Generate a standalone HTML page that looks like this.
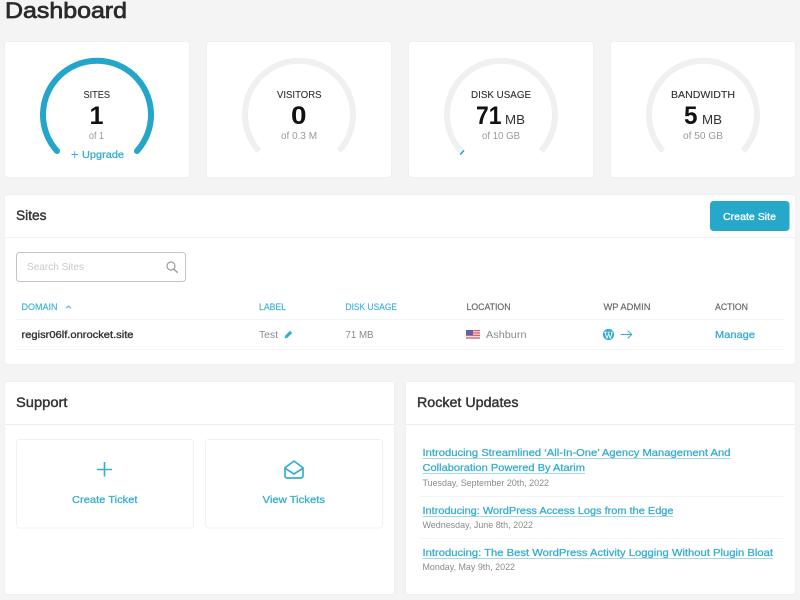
<!DOCTYPE html>
<html lang="en">
<head>
<meta charset="utf-8">
<title>Dashboard</title>
<style>
html,body{margin:0;padding:0;width:800px;height:600px;overflow:hidden;background:#f5f4f5}
svg{display:block;position:absolute;left:0;top:0;filter:blur(.3px)}
text{font-family:"Liberation Sans",sans-serif;font-size:10px}
.card{fill:#fff;stroke:#f1f0f1;stroke-width:1}
.h{fill:#333;font-size:13.5px;stroke:#333;stroke-width:.4}
.lbl{fill:#2c2c2c;font-size:10.5px;stroke:#2c2c2c;stroke-width:.1}
.num{font-weight:700;fill:#111;font-size:25px}
.mb{fill:#333;font-size:12.5px}
.of{fill:#9a9a9a;font-size:10.5px}
.th{font-size:9px;fill:#666;stroke:#666;stroke-width:.15}
.tb{font-size:9px;fill:#3fb1d1;stroke:#3fb1d1;stroke-width:.15}
.lnk{font-size:10.5px;fill:#38aecf;stroke:#38aecf;stroke-width:.3}
.dt{font-size:9.5px;fill:#8a8a8a}
.td{font-size:10.5px;fill:#8a8a8a}
.tr{fill:none;stroke:#f0f0f0;stroke-width:6}
.bl{fill:none;stroke:#23a6ca;stroke-width:6;stroke-linecap:round}
.ic{fill:none;stroke:#38aecf;stroke-linecap:round;stroke-linejoin:round}
.u{stroke:#a5dbe9;stroke-width:1}
.dv{stroke:#f3f3f3;stroke-width:1}
</style>
</head>
<body>
<svg width="800" height="600" viewBox="0 0 800 600" xmlns="http://www.w3.org/2000/svg">
<rect width="800" height="600" fill="#f5f4f5"/>
<text x="5" y="18" textLength="122" lengthAdjust="spacingAndGlyphs" style="font-size:22px;fill:#2a2a2a;stroke:#2a2a2a;stroke-width:.7">Dashboard</text>

<rect class="card" x="4.5" y="41.5" width="185" height="136" rx="3"/>
<rect class="card" x="206.5" y="41.5" width="185" height="136" rx="3"/>
<rect class="card" x="408.5" y="41.5" width="185" height="136" rx="3"/>
<rect class="card" x="610.5" y="41.5" width="185" height="136" rx="3"/>

<path class="bl" d="M57 151A54 54 0 1 1 137 151"/>
<text class="lbl" x="83.5" y="98" textLength="26.5" lengthAdjust="spacingAndGlyphs">SITES</text>
<text class="num" x="89.5" y="124" textLength="14" lengthAdjust="spacingAndGlyphs">1</text>
<text class="of" x="89" y="139" textLength="15" lengthAdjust="spacingAndGlyphs">of 1</text>
<path d="M71.5 154.5H78M74.7 151.3V157.7" fill="none" stroke="#38aecf" stroke-width=".9"/>
<text class="lnk" x="82" y="158" textLength="42" lengthAdjust="spacingAndGlyphs">Upgrade</text>

<path class="tr" d="M259 151A54 54 0 1 1 339 151"/>
<text class="lbl" x="277" y="98" textLength="44.5" lengthAdjust="spacingAndGlyphs">VISITORS</text>
<text class="num" x="291" y="124" textLength="15.5" lengthAdjust="spacingAndGlyphs">0</text>
<text class="of" x="281" y="139" textLength="36" lengthAdjust="spacingAndGlyphs">of 0.3 M</text>

<path class="tr" d="M461 151A54 54 0 1 1 541 151"/>
<path d="M460.2 154.5L464 150.3" stroke="#23a6ca" stroke-width="1.6" fill="none"/>
<text class="lbl" x="471" y="98" textLength="60" lengthAdjust="spacingAndGlyphs">DISK USAGE</text>
<text class="num" x="476" y="124" textLength="25.5" lengthAdjust="spacingAndGlyphs">71</text>
<text class="mb" x="505" y="124" textLength="20" lengthAdjust="spacingAndGlyphs">MB</text>
<text class="of" x="482" y="139" textLength="38" lengthAdjust="spacingAndGlyphs">of 10 GB</text>

<path class="tr" d="M663 151A54 54 0 1 1 743 151"/>
<text class="lbl" x="671" y="98" textLength="64" lengthAdjust="spacingAndGlyphs">BANDWIDTH</text>
<text class="num" x="684" y="124" textLength="13.5" lengthAdjust="spacingAndGlyphs">5</text>
<text class="mb" x="702" y="124" textLength="20" lengthAdjust="spacingAndGlyphs">MB</text>
<text class="of" x="683" y="139" textLength="40" lengthAdjust="spacingAndGlyphs">of 50 GB</text>

<rect class="card" x="4.5" y="194.5" width="791" height="170" rx="3"/>
<path d="M5 237.5H795" stroke="#f2f2f2"/>
<text class="h" x="16" y="220" textLength="30.5" lengthAdjust="spacingAndGlyphs">Sites</text>
<rect x="710" y="201" width="79.5" height="30" rx="3.5" fill="#26a8cb"/>
<text x="723" y="220" textLength="53" lengthAdjust="spacingAndGlyphs" style="fill:#fff;stroke:#fff;stroke-width:.3;font-size:10.5px">Create Site</text>

<rect x="16.5" y="252.5" width="169" height="29" rx="3" fill="#fff" stroke="#c4c4c4"/>
<text x="27" y="270" textLength="57" lengthAdjust="spacingAndGlyphs" style="fill:#c8c8c8;font-size:10.5px">Search Sites</text>
<circle cx="171" cy="266" r="4" fill="none" stroke="#9c9c9c" stroke-width="1.2"/>
<path d="M174 269.2L177.3 272.4" stroke="#9c9c9c" stroke-width="1.4" stroke-linecap="round"/>

<text class="tb" x="21.5" y="310" textLength="36" lengthAdjust="spacingAndGlyphs">DOMAIN</text>
<path d="M66 308.3L68.5 306L71 308.3" fill="none" stroke="#3fb1d1" stroke-width="1"/>
<text class="tb" x="259" y="310" textLength="27" lengthAdjust="spacingAndGlyphs">LABEL</text>
<text class="tb" x="345.5" y="310" textLength="51.5" lengthAdjust="spacingAndGlyphs">DISK USAGE</text>
<text class="th" x="466.5" y="310" textLength="44" lengthAdjust="spacingAndGlyphs">LOCATION</text>
<text class="th" x="603.5" y="310" textLength="47" lengthAdjust="spacingAndGlyphs">WP ADMIN</text>
<text class="th" x="715" y="310" textLength="33" lengthAdjust="spacingAndGlyphs">ACTION</text>
<path class="dv" d="M16 319.5H784M16 349.5H784"/>

<text x="21.5" y="338" textLength="112" lengthAdjust="spacingAndGlyphs" style="fill:#333;stroke:#333;stroke-width:.35;font-size:10.5px">regisr06lf.onrocket.site</text>
<text class="td" x="259" y="338" textLength="19" lengthAdjust="spacingAndGlyphs">Test</text>
<path d="M284.5 338.5L285.2 335.6L290 330.8L292.2 333L287.4 337.8Z" fill="#38aecf"/>
<text class="td" x="345.5" y="338" textLength="28" lengthAdjust="spacingAndGlyphs">71 MB</text>

<rect x="466" y="330" width="14" height="9" fill="#f3dfe2"/>
<path d="M466 330.6H480M466 333H480M466 335.4H480M466 338H480" stroke="#d9626d" stroke-width="1.2"/>
<rect x="466" y="330" width="7" height="5" fill="#5566b0"/>
<text class="td" x="486" y="338" textLength="40.5" lengthAdjust="spacingAndGlyphs">Ashburn</text>

<circle cx="608.5" cy="334.5" r="5.6" fill="#38aecf"/>
<path d="M604.8 332.2L607 338.3L608.6 333.8L610.2 338.3L612.3 332.2M604.3 332.2H606.8M607.7 332.2H610M611 332.2H612.8" fill="none" stroke="#fff" stroke-width=".8"/>
<path class="ic" d="M621 334.5H631.5M628 331L631.8 334.5L628 338" stroke-width="1.1"/>
<text class="lnk" x="715" y="338" textLength="40" lengthAdjust="spacingAndGlyphs">Manage</text>

<rect class="card" x="4.5" y="381.5" width="390" height="213" rx="3"/>
<path d="M5 424.5H394" stroke="#ececec"/>
<text class="h" x="16" y="407" textLength="51.5" lengthAdjust="spacingAndGlyphs">Support</text>
<rect x="16.5" y="439.5" width="177" height="88.5" rx="3" fill="#fff" stroke="#f1f1f1"/>
<rect x="205.5" y="439.5" width="177" height="88.5" rx="3" fill="#fff" stroke="#f1f1f1"/>
<path d="M97 469.5H112M104.5 462V476.5" fill="none" stroke="#38aecf" stroke-width="1.6"/>
<text class="lnk" x="72" y="503" textLength="65.5" lengthAdjust="spacingAndGlyphs">Create Ticket</text>
<path class="ic" stroke-width="1.7" d="M285 467.8L294 461L303 467.8V476A2 2 0 0 1 301 478H287A2 2 0 0 1 285 476Z"/>
<path class="ic" stroke-width="1.7" d="M285.5 468.5L294 474L302.5 468.5"/>
<text class="lnk" x="262.5" y="503" textLength="62.5" lengthAdjust="spacingAndGlyphs">View Tickets</text>

<rect class="card" x="405.5" y="381.5" width="390" height="213" rx="3"/>
<path d="M406 424.5H795" stroke="#ececec"/>
<text class="h" x="417" y="407" textLength="101.5" lengthAdjust="spacingAndGlyphs">Rocket Updates</text>

<text class="lnk" x="422.5" y="456" textLength="308" lengthAdjust="spacingAndGlyphs">Introducing Streamlined ‘All-In-One’ Agency Management And</text>
<path class="u" d="M422.5 458.5H730.5"/>
<text class="lnk" x="422.5" y="471" textLength="162.5" lengthAdjust="spacingAndGlyphs">Collaboration Powered By Atarim</text>
<path class="u" d="M422.5 473.5H585"/>
<text class="dt" x="422.5" y="486" textLength="126.5" lengthAdjust="spacingAndGlyphs">Tuesday, September 20th, 2022</text>
<path class="dv" d="M420 496.5H783"/>
<text class="lnk" x="422.5" y="514" textLength="251" lengthAdjust="spacingAndGlyphs">Introducing: WordPress Access Logs from the Edge</text>
<path class="u" d="M422.5 516.5H673.5"/>
<text class="dt" x="422.5" y="528" textLength="110.5" lengthAdjust="spacingAndGlyphs">Wednesday, June 8th, 2022</text>
<path class="dv" d="M420 538.5H783"/>
<text class="lnk" x="422.5" y="556" textLength="350.5" lengthAdjust="spacingAndGlyphs">Introducing: The Best WordPress Activity Logging Without Plugin Bloat</text>
<path class="u" d="M422.5 558.5H773"/>
<text class="dt" x="422.5" y="570" textLength="92.5" lengthAdjust="spacingAndGlyphs">Monday, May 9th, 2022</text>
</svg>
</body>
</html>
